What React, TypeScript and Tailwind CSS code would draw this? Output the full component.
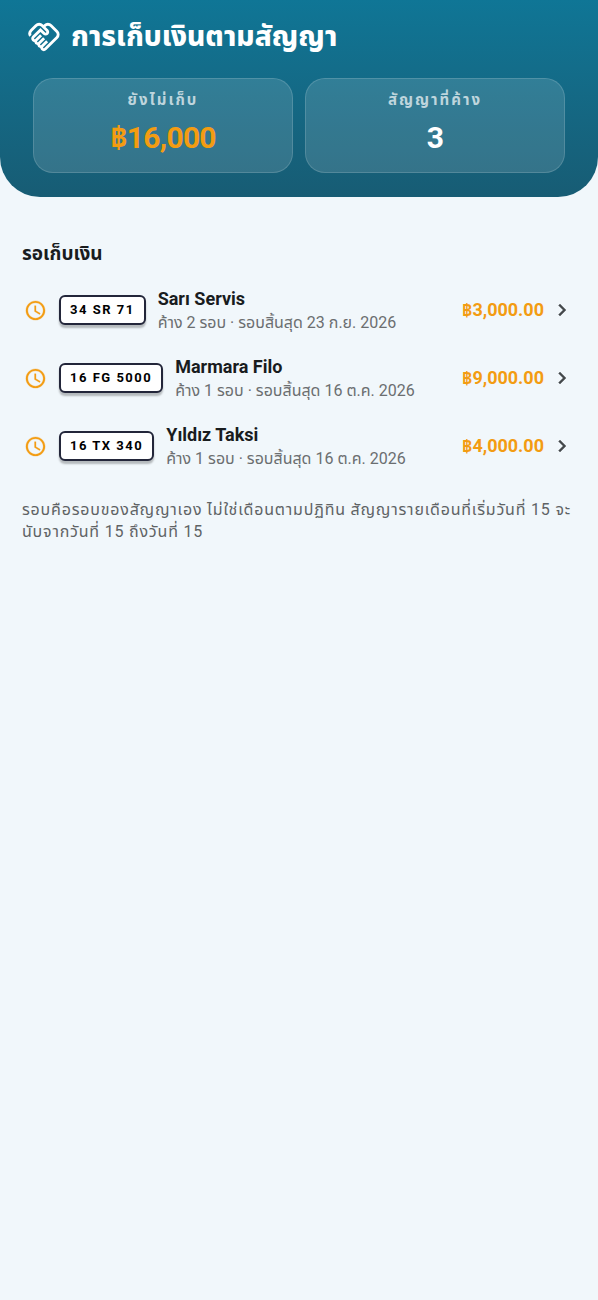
import { MdAccessTime, MdChevronRight, MdOutlineHandshake } from 'react-icons/md';

interface Contract {
    plate: string;
    name: string;
    detail: string;
    amount: string;
}

const contracts: Contract[] = [
    { plate: '34 SR 71', name: 'Sarı Servis', detail: 'ค้าง 2 รอบ · รอบสิ้นสุด 23 ก.ย. 2026', amount: '฿3,000.00' },
    { plate: '16 FG 5000', name: 'Marmara Filo', detail: 'ค้าง 1 รอบ · รอบสิ้นสุด 16 ต.ค. 2026', amount: '฿9,000.00' },
    { plate: '16 TX 340', name: 'Yıldız Taksi', detail: 'ค้าง 1 รอบ · รอบสิ้นสุด 16 ต.ค. 2026', amount: '฿4,000.00' },
];

function StatCard({ label, value, valueClass }: { label: string; value: string; valueClass: string }) {
    return (
        <div className="flex-1 flex flex-col items-center gap-1 rounded-[20px] border border-white/15 bg-white/13 pt-[9px] pb-3">
            <span className="text-[15px] leading-6 font-bold tracking-[2px] text-white/70">{label}</span>
            <span className={`text-[30px] leading-[44px] font-bold tracking-tight ${valueClass}`}>{value}</span>
        </div>
    );
}

function ContractRow({ contract }: { contract: Contract }) {
    return (
        <li>
            <button type="button" className="flex w-full h-[68px] items-center gap-3 px-0.5 text-left">
                <MdAccessTime className="w-[23px] h-[23px] shrink-0 text-[#f39c12] [&_[fill=none]]:stroke-none" strokeWidth={0.3} />
                <span className="shrink-0 rounded-md border-2 border-[#23263a] bg-white px-[9px] text-[13px] leading-[26px] font-bold tracking-[1.5px] text-black shadow-[0_3px_2px_rgba(0,0,0,0.25)]">
                    {contract.plate}
                </span>
                <span className="flex flex-1 min-w-0 flex-col pt-0.5">
                    <span className="text-lg leading-6 font-bold text-[#191c1e]">{contract.name}</span>
                    <span className="text-base leading-6 text-[#6b6e70]">{contract.detail}</span>
                </span>
                <span className="text-lg font-bold text-[#f39c12]">{contract.amount}</span>
                <MdChevronRight className="-ml-1.5 w-6 h-6 shrink-0 text-[#44484b] [&_[fill=none]]:stroke-none" strokeWidth={0.4} />
            </button>
        </li>
    );
}

function App() {
    return (
        <div className="min-h-screen bg-[#f1f7fb] font-['Roboto','Noto_Sans_Thai','Noto_Sans',sans-serif]">
            <header className="rounded-b-[40px] bg-linear-to-b from-[#0f7696] to-[#175c74] px-[33px] pt-[15px] pb-6 text-white">
                <h1 className="flex items-center gap-2.5 text-[28px] leading-[44px] font-extrabold -ml-1.5">
                    <MdOutlineHandshake className="w-[34px] h-[34px]" />
                    การเก็บเงินตามสัญญา
                </h1>
                <div className="mt-[19px] flex gap-3">
                    <StatCard label="ยังไม่เก็บ" value="฿16,000" valueClass="text-[#f39c12]" />
                    <StatCard label="สัญญาที่ค้าง" value="3" valueClass="text-white" />
                </div>
            </header>

            <main className="px-[22px] pt-[41px]">
                <h2 className="text-[19px] leading-8 font-bold text-[#191c1e]">รอเก็บเงิน</h2>
                <ul className="mt-1.5">
                    {contracts.map((contract) => (
                        <ContractRow key={contract.plate} contract={contract} />
                    ))}
                </ul>
                <p className="mt-[19px] text-base leading-[22px] tracking-wider text-[#5f6365]">
                    รอบคือรอบของสัญญาเอง ไม่ใช่เดือนตามปฏิทิน สัญญารายเดือนที่เริ่มวันที่ 15 จะนับจากวันที่ 15 ถึงวันที่ 15
                </p>
            </main>
        </div>
    );
}

export default App;
